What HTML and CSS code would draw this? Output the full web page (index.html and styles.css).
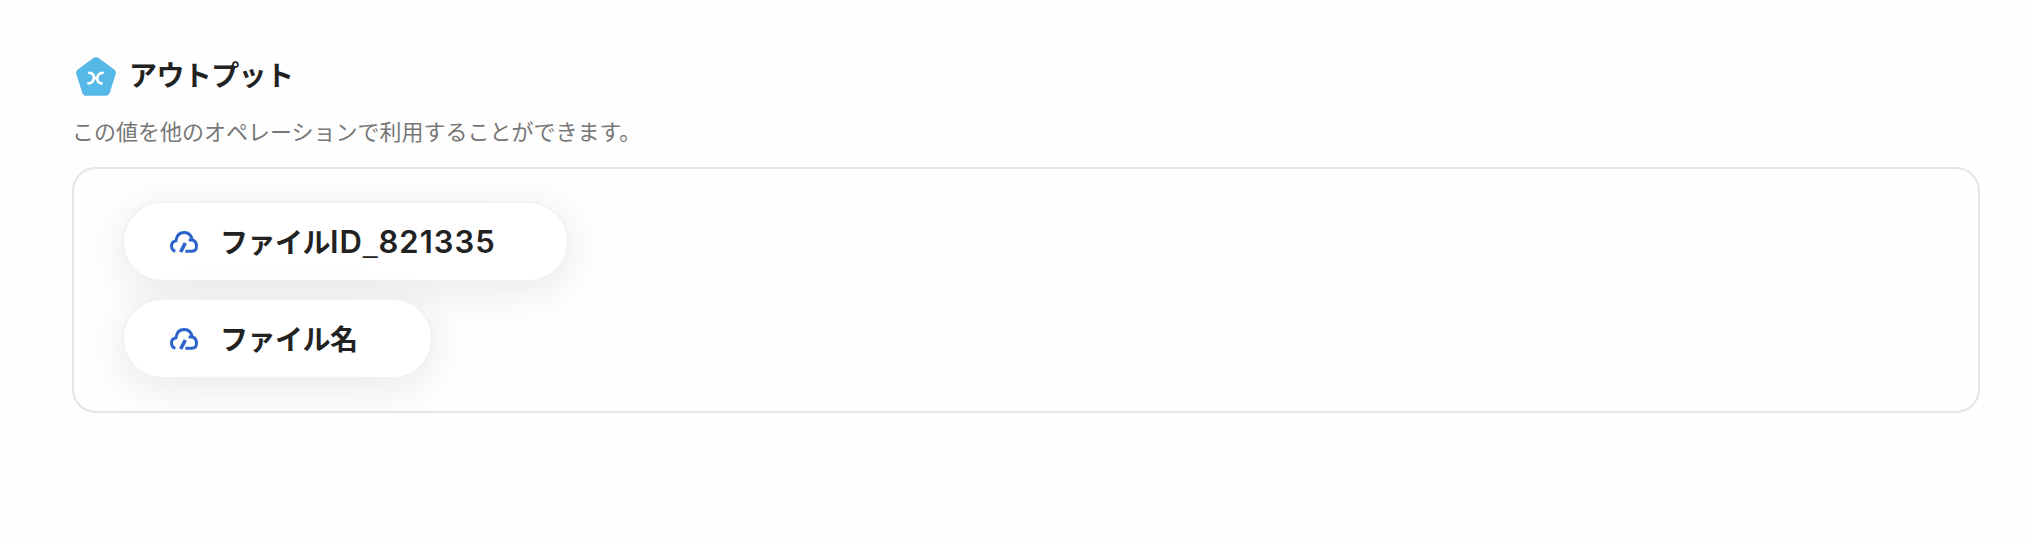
FILE: index.html
```html
<!DOCTYPE html>
<html lang="ja">

<head>
  <meta charset="UTF-8">
  <meta name="viewport" content="width=device-width, initial-scale=1.0">
  <title>アウトプット</title>
  <link rel="stylesheet" href="styles.css">
</head>

<body>
  <section class="output">
    <div class="output-header">
      <svg class="output-icon" viewBox="0 0 40 39" aria-hidden="true">
        <path d="M17.4 1.1Q20 -0.6 22.6 1.1L38.2 12.6Q40.5 14.4 39.6 17.2L33.7 35.9Q32.7 38.7 29.8 38.7H10.2Q7.3 38.7 6.3 35.9L0.4 17.2Q-0.5 14.4 1.8 12.6Z" fill="#56b8e6"/>
        <path d="M13.4 15.8C20.4 15.8 18.6 26.6 12.4 26.4M26.6 15.8C20.4 15.8 19 26.6 25.6 26.4M17.8 21.2H21.4" fill="none" stroke="#fff" stroke-width="2.7" stroke-linecap="round"/>
      </svg>
      <h2>アウトプット</h2>
    </div>
    <p class="output-desc">この値を他のオペレーションで利用することができます。</p>

    <div class="output-list">
      <div class="output-item">
        <svg class="item-icon" viewBox="0 0 84 66" aria-hidden="true">
          <path d="M16 61C7 58 4.5 51 4.5 45C4.5 36 9 31 18 29C20 13 30 4.5 43 4.5C56 4.5 64 12 67 28M56 27H68C76 30 79.5 37 79.5 46C79.5 56 74 61 66 61H46"/>
          <path class="slash" d="M32 63L46 36"/>
        </svg>
        <span class="item-name">ファイル<span class="item-id">ID<span class="item-sep">_</span>821335</span></span>
      </div>
      <div class="output-item">
        <svg class="item-icon" viewBox="0 0 84 66" aria-hidden="true">
          <path d="M16 61C7 58 4.5 51 4.5 45C4.5 36 9 31 18 29C20 13 30 4.5 43 4.5C56 4.5 64 12 67 28M56 27H68C76 30 79.5 37 79.5 46C79.5 56 74 61 66 61H46"/>
          <path class="slash" d="M32 63L46 36"/>
        </svg>
        <span class="item-name">ファイル名</span>
      </div>
    </div>
  </section>
</body>

</html>
```
FILE: styles.css
```css
* {
  margin: 0;
  padding: 0;
  box-sizing: border-box;
}

body {
  background-color: #fefefe;
  color: #222;
  font-family: "Noto Sans CJK JP", sans-serif;
}

.output {
  padding: 53px 48px 0 72px;
}

.output-header {
  display: flex;
  align-items: center;
  height: 42px;
  padding-left: 4px;
}

.output-icon {
  width: 40px;
  height: 39px;
  margin-right: 13px;
  margin-top: 4px;
}

.output-header h2 {
  font-size: 28px;
  font-weight: 700;
  line-height: 42px;
  letter-spacing: -0.6px;
}

.output-desc {
  margin-top: 18px;
  color: #777;
  font-size: 22px;
  line-height: 34px;
}

.output-list {
  display: flex;
  flex-direction: column;
  align-items: flex-start;
  gap: 16px;
  margin-top: 20px;
  padding: 32px 48px;
  border: 2px solid #e5e5e5;
  border-radius: 24px;
}

.output-item {
  display: flex;
  align-items: center;
  height: 81px;
  padding: 0 73px 0 46px;
  border: 2px solid #f2f2f2;
  border-radius: 41px;
  background-color: #fff;
  box-shadow: 0 8px 44px rgba(0, 0, 0, 0.09);
}

.item-icon {
  width: 28px;
  height: 22px;
  margin-right: 22px;
}

.item-icon path {
  fill: none;
  stroke: #2c63cb;
  stroke-width: 9;
}

.item-icon .slash {
  stroke-width: 11;
}

.item-name {
  padding-bottom: 2px;
  font-size: 28px;
  font-weight: 700;
  line-height: 40px;
  letter-spacing: -0.5px;
  white-space: nowrap;
}

.item-id {
  margin-right: -2px;
  font-family: Inter, "Liberation Sans", sans-serif;
  font-size: 31px;
  font-weight: 600;
  line-height: 1;
  letter-spacing: 1px;
}

.item-sep {
  font-family: "Liberation Sans", sans-serif;
  font-size: 26px;
  font-weight: 400;
}
```
